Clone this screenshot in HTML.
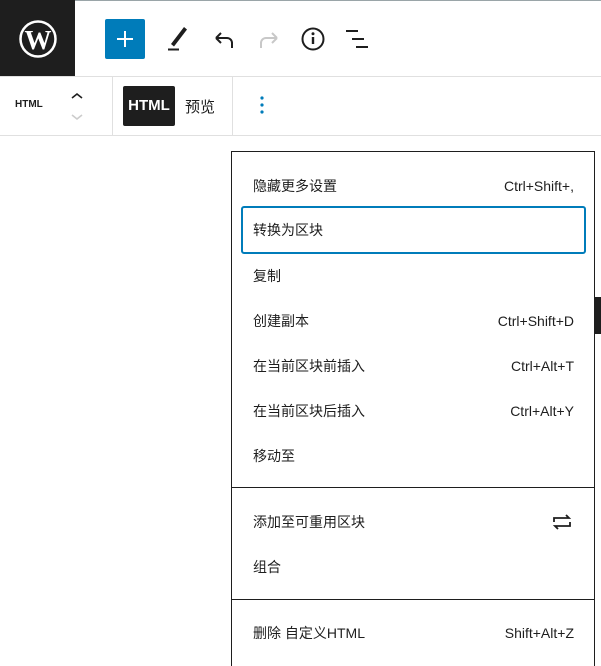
<!DOCTYPE html>
<html><head><meta charset="utf-8"><style>
*{box-sizing:border-box;margin:0;padding:0}
body{width:601px;height:666px;overflow:hidden;background:#fff;font-family:"Liberation Sans","Noto Sans CJK SC",sans-serif;color:#1e1e1e;position:relative}
.abs{position:absolute}
.item{position:absolute;left:241px;width:345px;height:40px;font-size:14px;display:flex;align-items:center;justify-content:space-between;padding:0 12px}
.sc{font-size:14px;color:#1e1e1e}
</style></head><body>
<div class="abs" style="left:0;top:0;width:601px;height:1px;background:#9aa5a8"></div>
<div class="abs" style="left:0;top:0;width:75px;height:76px;background:#1e1e1e"></div>
<svg class="abs" style="left:18px;top:19px" width="40" height="40" viewBox="0 0 40 40"><circle cx="20" cy="20" r="17.5" fill="none" stroke="#fff" stroke-width="2.5"/><text x="20" y="30" text-anchor="middle" font-family="Liberation Serif" font-weight="bold" font-size="27" fill="#fff">W</text></svg>
<div class="abs" style="left:105px;top:19px;width:40px;height:40px;background:#007cba;border-radius:2px"></div>
<svg class="abs" style="left:105px;top:19px" width="40" height="40"><path d="M20 12v16M12 20h16" stroke="#fff" stroke-width="2"/></svg>
<svg class="abs" style="left:164px;top:24px" width="28" height="28" viewBox="0 0 28 28"><path d="M7 20l3 2.5L23 5.5 20 3z" fill="#1e1e1e"/><path d="M4 25.5h11" stroke="#1e1e1e" stroke-width="2"/></svg>
<svg class="abs" style="left:209px;top:26px" width="28" height="28"><path d="M7 12h11a5 5 0 0 1 5 5v5M7 12l5-5M7 12l5 5" fill="none" stroke="#1e1e1e" stroke-width="2"/></svg>
<svg class="abs" style="left:254px;top:26px" width="28" height="28"><path d="M23 12H12a5 5 0 0 0-5 5v5M23 12l-5-5M23 12l-5 5" fill="none" stroke="#c8c8c8" stroke-width="2"/></svg>
<svg class="abs" style="left:300px;top:26px" width="28" height="28"><circle cx="13" cy="13" r="10.5" fill="none" stroke="#1e1e1e" stroke-width="2"/><path d="M13 11v7" stroke="#1e1e1e" stroke-width="2.4"/><circle cx="13" cy="7.8" r="1.5" fill="#1e1e1e"/></svg>
<svg class="abs" style="left:344px;top:28px" width="28" height="24"><path d="M2 3h12M8 11h12M12 19h12" stroke="#1e1e1e" stroke-width="2"/></svg>
<div class="abs" style="left:0;top:76px;width:601px;height:1px;background:#e0e0e0"></div>
<div class="abs" style="left:0;top:135px;width:601px;height:1px;background:#e0e0e0"></div>
<div class="abs" style="left:112px;top:77px;width:1px;height:58px;background:#e0e0e0"></div>
<div class="abs" style="left:232px;top:77px;width:1px;height:58px;background:#e0e0e0"></div>
<div class="abs" style="left:15px;top:99px;font-size:10px;font-weight:bold">HTML</div>
<svg class="abs" style="left:68px;top:88px" width="20" height="36"><path d="M4 10l5-4 5 4" fill="none" stroke="#1e1e1e" stroke-width="1.6"/><path d="M4 27l5 4 5-4" fill="none" stroke="#ccc" stroke-width="1.6"/></svg>
<div class="abs" style="left:123px;top:86px;width:52px;height:40px;background:#1e1e1e;border-radius:2px;color:#fff;font-weight:bold;font-size:15px;line-height:40px;text-align:center">HTML</div>
<div class="abs" style="left:185px;top:96px;font-size:15px">预览</div>
<svg class="abs" style="left:258px;top:94px" width="8" height="24"><circle cx="4" cy="4" r="1.6" fill="#007cba"/><circle cx="4" cy="11" r="1.6" fill="#007cba"/><circle cx="4" cy="18" r="1.6" fill="#007cba"/></svg>
<div class="abs" style="left:594px;top:297px;width:7px;height:37px;background:#1e1e1e"></div>
<div class="abs" style="left:231px;top:151px;width:364px;height:515px;border:1px solid #1e1e1e;background:#fff;border-bottom:none"></div>
<div class="item" style="top:166px"><span>隐藏更多设置</span><span class="sc">Ctrl+Shift+,</span></div>
<div class="item" style="top:206px;height:48px;border:2px solid #007cba;border-radius:3px;padding-left:10px"><span>转换为区块</span></div>
<div class="item" style="top:256px"><span>复制</span></div>
<div class="item" style="top:301px"><span>创建副本</span><span class="sc">Ctrl+Shift+D</span></div>
<div class="item" style="top:346px"><span>在当前区块前插入</span><span class="sc">Ctrl+Alt+T</span></div>
<div class="item" style="top:391px"><span>在当前区块后插入</span><span class="sc">Ctrl+Alt+Y</span></div>
<div class="item" style="top:436px"><span>移动至</span></div>
<div class="abs" style="left:232px;top:487px;width:362px;height:1px;background:#1e1e1e"></div>
<div class="item" style="top:502px"><span>添加至可重用区块</span><svg width="24" height="24"><path d="M4 12V8h15l-3-3M20 12v4H5l3 3" fill="none" stroke="#1e1e1e" stroke-width="1.8"/></svg></div>
<div class="item" style="top:547px"><span>组合</span></div>
<div class="abs" style="left:232px;top:599px;width:362px;height:1px;background:#1e1e1e"></div>
<div class="item" style="top:613px"><span>删除 自定义HTML</span><span class="sc">Shift+Alt+Z</span></div>
</body></html>
